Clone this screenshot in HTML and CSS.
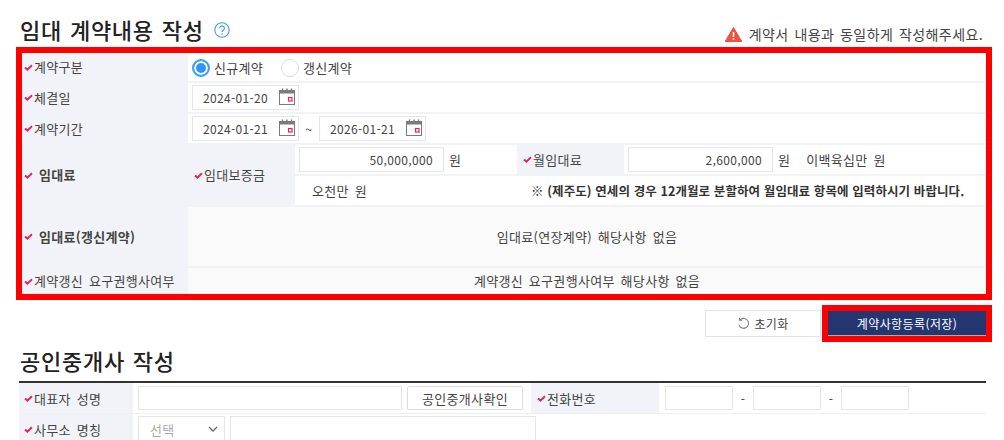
FILE: index.html
```html
<!DOCTYPE html>
<html lang="ko">
<head>
<meta charset="utf-8">
<title>임대 계약내용 작성</title>
<link rel="stylesheet" href="styles.css">
</head>
<body>
<svg class="defs" width="0" height="0">
  <symbol id="chk" viewBox="0 0 9 7"><path d="M1 3.400 L3.400 5.600 L8 1.200" fill="none" stroke="#e6245f" stroke-width="2"/></symbol>
  <symbol id="cal" viewBox="0 0 16 17">
    <path d="M3.500 0.500v3M8 0.500v3M12.500 0.500v3" stroke="#777" stroke-width="1.400" fill="none"/>
    <rect x="0.500" y="2.500" width="15" height="14" fill="#fff" stroke="#7b7b7b"/>
    <rect x="0.500" y="2.500" width="15" height="3" fill="#7b7b7b"/>
    <rect x="9.500" y="9.500" width="3.500" height="3.500" fill="#fff" stroke="#e6245f" stroke-width="1.200"/>
  </symbol>
</svg>
<main class="page">
  <header class="head">
    <h1 class="title">임대 계약내용 작성</h1>
    <svg class="help" viewBox="0 0 16 16" width="16" height="16"><circle cx="8" cy="8" r="7.200" fill="none" stroke="#4a9bdc" stroke-width="1.100"/><path d="M5.600 6.200a2.400 2.300 0 1 1 3.600 2c-.8.5-1.200.9-1.200 1.900" fill="none" stroke="#4a9bdc" stroke-width="1.200"/><circle cx="8" cy="12" r=".8" fill="#4a9bdc"/></svg>
    <p class="warn"><svg viewBox="0 0 17 15" width="17" height="15"><path d="M8.500 .5 16.800 14.500H.2Z" fill="#f0503f" stroke="#f0503f" stroke-linejoin="round"/><path d="M8.500 5v5M8.500 11.200v1.600" stroke="#fff" stroke-width="1.500"/></svg>계약서 내용과 동일하게 작성해주세요.</p>
  </header>

  <section class="redbox">
    <table class="form">
      <colgroup><col class="c1"><col class="c2"><col class="c3"><col class="c4"><col></colgroup>
      <tr class="r1">
        <th class="lab"><svg class="ck"><use href="#chk"/></svg>계약구분</th>
        <td colspan="4" class="pad">
          <span class="radio on"></span><span class="rtxt">신규계약</span>
          <span class="radio"></span><span class="rtxt">갱신계약</span>
        </td>
      </tr>
      <tr class="r2">
        <th class="lab"><svg class="ck"><use href="#chk"/></svg>체결일</th>
        <td colspan="4" class="pad"><span class="date">2024-01-20<svg class="calic"><use href="#cal"/></svg></span></td>
      </tr>
      <tr class="r3">
        <th class="lab"><svg class="ck"><use href="#chk"/></svg>계약기간</th>
        <td colspan="4" class="pad"><span class="date">2024-01-21<svg class="calic"><use href="#cal"/></svg></span><span class="tilde">~</span><span class="date">2026-01-21<svg class="calic"><use href="#cal"/></svg></span></td>
      </tr>
      <tr class="r4a">
        <th class="lab strong" rowspan="2"><svg class="ck wide"><use href="#chk"/></svg>임대료</th>
        <th class="lab sublab" rowspan="2"><svg class="ck"><use href="#chk"/></svg>임대보증금</th>
        <td class="amt"><span class="num n1">50,000,000</span><span class="won">원</span></td>
        <th class="lab sublab"><svg class="ck"><use href="#chk"/></svg>월임대료</th>
        <td class="amt2"><span class="num n2">2,600,000</span><span class="won">원</span><span class="korean">이백육십만 원</span></td>
      </tr>
      <tr class="r4b">
        <td class="kr1">오천만 원</td>
        <td colspan="2" class="note">※ (제주도) 연세의 경우 12개월로 분할하여 월임대료 항목에 입력하시기 바랍니다.</td>
      </tr>
      <tr class="r5">
        <th class="lab strong"><svg class="ck wide"><use href="#chk"/></svg>임대료(갱신계약)</th>
        <td colspan="4" class="na">임대료(연장계약) 해당사항 없음</td>
      </tr>
      <tr class="r6">
        <th class="lab"><svg class="ck"><use href="#chk"/></svg>계약갱신 요구권행사여부</th>
        <td colspan="4" class="na">계약갱신 요구권행사여부 해당사항 없음</td>
      </tr>
    </table>
  </section>

  <div class="actions">
    <button class="btn reset" type="button"><svg viewBox="0 0 14 14" width="13" height="13"><path d="M3.400 3A5.300 5.300 0 1 1 2 8.200" fill="none" stroke="#777" stroke-width="1.100"/><path d="M2.600 .8V3.600H5.600" fill="none" stroke="#777" stroke-width="1.100"/></svg>초기화</button>
    <span class="savewrap"><button class="btn save" type="button">계약사항등록(저장)</button></span>
  </div>

  <h2 class="title sub">공인중개사 작성</h2>
  <div class="grid2">
    <div class="lab2"><svg class="ck"><use href="#chk"/></svg>대표자 성명</div>
    <div class="row-a">
      <span class="box name"></span>
      <span class="box check">공인중개사확인</span>
      <span class="lab3"><svg class="ck"><use href="#chk"/></svg>전화번호</span>
      <span class="box tel"></span><span class="dash">-</span><span class="box tel"></span><span class="dash">-</span><span class="box tel"></span>
    </div>
    <div class="lab2"><svg class="ck"><use href="#chk"/></svg>사무소 명칭</div>
    <div class="row-b">
      <span class="box sel">선택<svg viewBox="0 0 10 6" width="10" height="6"><path d="M1 1l4 4 4-4" fill="none" stroke="#666" stroke-width="1.300"/></svg></span>
      <span class="box office"></span>
    </div>
  </div>
</main>
</body>
</html>
```

FILE: styles.css
```css
* { box-sizing: border-box; }
html, body { margin: 0; height: 440px; overflow: hidden; background: #fff; }
body { font-family: "Noto Sans CJK KR", "Noto Sans", sans-serif; font-size: 13px; letter-spacing: .3px; word-spacing: 2px; color: #444; }
.defs { position: absolute; }
.page { padding: 15px 12px 0 16px; width: 1004px; }

.head { display: flex; align-items: center; height: 32px; padding-left: 4px; }
.head .title { margin-bottom: 4px; }
.title { margin: 0; font-size: 22px; font-weight: 500; color: #222; line-height: 30px; letter-spacing: .75px; word-spacing: 1px; }
.help { margin: 0 0 3px 10px; }
.warn { margin: 6px 0 0 auto; padding-right: 9px; font-size: 14px; letter-spacing: .4px; word-spacing: 1.500px; color: #444; display: flex; align-items: center; gap: 7px; line-height: 18px; }

.redbox { border: 6px solid #f00; width: 976px; height: 253px; }
.form { border-collapse: collapse; table-layout: fixed; width: 964px; }
.c1 { width: 166px; } .c2 { width: 107px; } .c3 { width: 222px; } .c4 { width: 107px; }
.form th, .form td { padding: 0; border-bottom: 2px solid #f2f3f6; vertical-align: middle; line-height: 18px; }
.r1 { height: 29px; } .r2, .r3 { height: 31px; } .r4a { height: 31px; } .r4b { height: 31px; } .r5 { height: 61px; } .r6 { height: 27px; }
.form .r6 th, .form .r6 td { border-bottom: 0; }
.lab { background: #f2f3f8; font-weight: 400; text-align: left; color: #444; white-space: nowrap; padding-left: 2px !important; }
.form .sublab { padding-left: 6px !important; }
.strong { font-weight: 700; }
.ck { width: 9px; height: 7px; margin: 0 1px 2px 0; vertical-align: middle; }
.ck.wide { margin-right: 6px; }
.pad { padding-left: 4px !important; }

.radio { display: inline-block; width: 18px; height: 18px; border-radius: 50%; border: 1px solid #ddd; background: #fff; vertical-align: middle; }
.radio.on { border: 2px solid #3f9ff0; box-shadow: inset 0 0 0 2px #fff; background: #2d95f5; }
.rtxt { margin: 0 12px 0 4px; vertical-align: middle; }

.date { display: inline-flex; align-items: center; justify-content: space-between; width: 107px; height: 25px; border: 1px solid #e6e6e6; padding: 0 3px 0 10px; vertical-align: middle; font-size: 12px; letter-spacing: .35px; }
.calic { width: 16px; height: 17px; margin-bottom: 2px; }
.tilde { display: inline-block; width: 20px; text-align: center; vertical-align: middle; font-size: 12px; }

.amt { padding-left: 4px !important; }
.amt2 { padding-left: 4px !important; white-space: nowrap; }
.num { display: inline-block; height: 25px; line-height: 23px; border: 1px solid #e6e6e6; text-align: right; padding-right: 10px; vertical-align: middle; font-size: 12px; letter-spacing: .35px; }
.n1 { width: 145px; } .n2 { width: 145px; }
.won { margin-left: 5px; vertical-align: middle; }
.korean { margin-left: 16px; vertical-align: middle; }
.kr1 { padding-left: 17px !important; }
.note { font-size: 12.500px; font-weight: 700; letter-spacing: .1px; word-spacing: 0; padding-left: 14px !important; white-space: nowrap; color: #333; }
.na { background: #fafafa; text-align: center; }

.actions { display: flex; justify-content: flex-end; align-items: center; height: 47px; width: 976px; }
.btn { font: inherit; letter-spacing: inherit; cursor: pointer; }
.reset { width: 116px; height: 27px; background: #fff; border: 1px solid #e3e3e3; color: #444; display: flex; align-items: center; justify-content: center; gap: 4px; margin-right: 1px; font-size: 12px; }
.savewrap { border: 6px solid #f00; width: 170px; height: 37px; display: block; }
.save { display: block; width: 158px; height: 25px; font-size: 12px; letter-spacing: .4px; background: #23366f; color: #fff; border: 0; border-bottom: 1px solid #aab; }

.sub { margin: -2px 0 0 4px; line-height: 30px; }
.grid2 { margin: 6px 0 0 3px; width: 967px; border-top: 2px solid #333; display: grid; grid-template-columns: 114px 1fr; grid-auto-rows: 31px; }
.lab2 { background: #f2f3f8; padding-left: 5px; display: flex; align-items: center; border-bottom: 1px solid #f0f0f0; }
.lab2 .ck, .lab3 .ck { margin: 0 1px 0 0; flex: none; }
.row-a, .row-b { display: flex; align-items: center; padding-left: 5px; border-bottom: 1px solid #f0f0f0; }
.box { display: flex; align-items: center; height: 24px; border: 1px solid #e6e6e6; }
.name { width: 264px; }
.check { width: 116px; margin-left: 5px; justify-content: center; border-color: #ddd; border-radius: 2px; }
.lab3 { align-self: stretch; width: 128px; margin-left: 8px; padding-left: 6px; background: #f2f3f8; display: flex; align-items: center; }
.tel { width: 68px; }
.row-a .lab3 + .tel { margin-left: 6px; }
.dash { width: 20px; text-align: center; font-size: 12px; }
.sel { width: 87px; height: 26px; padding: 0 6px 0 11px; justify-content: space-between; color: #aaa; }
.office { width: 306px; height: 26px; margin-left: 5px; }
```
